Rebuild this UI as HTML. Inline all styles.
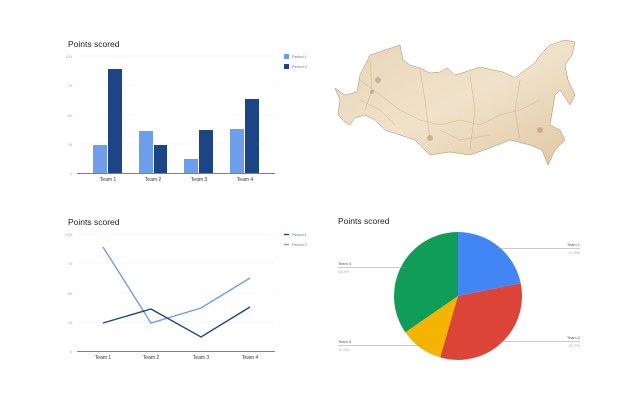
<!DOCTYPE html>
<html><head><style>
html,body{margin:0;padding:0;background:#fff;width:643px;height:406px;overflow:hidden}
svg{display:block;font-family:"Liberation Sans",sans-serif}
</style></head><body>
<svg width="643" height="406" viewBox="0 0 643 406">
<!-- Bar chart -->
<text x="68" y="47" font-size="8.5" fill="#222">Points scored</text>
<g stroke="#eee" stroke-width="0.6">
<line x1="77" y1="56" x2="275" y2="56"/><line x1="77" y1="85" x2="275" y2="85"/><line x1="77" y1="115" x2="275" y2="115"/><line x1="77" y1="144" x2="275" y2="144"/>
</g>
<line x1="77" y1="173.5" x2="275" y2="173.5" stroke="#555" stroke-width="0.8"/>
<g font-size="4" fill="#aaa" text-anchor="end">
<text x="72" y="58">100</text><text x="72" y="87">75</text><text x="72" y="117">50</text><text x="72" y="146">25</text><text x="72" y="175">0</text></g>
<g fill="#6d9eeb"><rect x="93" y="145" width="14" height="28"/><rect x="139" y="131" width="14" height="42"/><rect x="184" y="159" width="14" height="14"/><rect x="230" y="129" width="14" height="44"/></g>
<g fill="#1c4587"><rect x="108" y="69" width="14" height="104"/><rect x="154" y="145" width="13" height="28"/><rect x="199" y="130" width="14" height="43"/><rect x="245" y="99" width="14" height="74"/></g>
<g font-size="5" fill="#333" text-anchor="middle"><text x="108" y="181">Team 1</text><text x="153" y="181">Team 2</text><text x="199" y="181">Team 3</text><text x="245" y="181">Team 4</text></g>
<rect x="284" y="54" width="5" height="5" fill="#6d9eeb"/><rect x="284" y="64" width="5" height="5" fill="#1c4587"/>
<g font-size="4" fill="#777"><text x="292" y="58">Period 1</text><text x="292" y="68">Period 2</text></g>

<!-- Map -->
<defs><linearGradient id="mg" x1="0" y1="0" x2="1" y2="1"><stop offset="0" stop-color="#e6d4b6"/><stop offset="0.5" stop-color="#f0e2ca"/><stop offset="1" stop-color="#e0c8a2"/></linearGradient></defs>
<path d="M335,88 L345,95 L357,92 L360,75 L370,55 L385,50 L400,45 L403,60 L410,65 L420,68 L430,73 L440,72 L447,68 L455,75 L465,72 L480,67 L493,70 L503,72 L515,78 L525,70 L535,63 L540,55 L550,45 L565,40 L575,42 L572,55 L565,65 L568,80 L575,95 L570,105 L560,90 L555,95 L550,125 L560,130 L565,140 L555,150 L548,165 L542,150 L530,145 L510,140 L490,148 L470,155 L450,152 L430,155 L415,140 L400,135 L385,130 L375,120 L365,115 L355,118 L350,125 L345,122 L338,115 L340,100 Z" fill="url(#mg)" stroke="#a88a62" stroke-width="0.5"/>
<g stroke="#c4a880" stroke-width="0.4" fill="none"><path d="M360,80 L380,95 L400,110 L420,120 L440,125 L460,120 L480,125 L500,115 L520,110 L540,100"/><path d="M370,60 L372,90 L365,110"/><path d="M420,70 L425,100 L430,140"/><path d="M470,75 L475,110 L470,150"/><path d="M520,80 L515,110 L520,140"/><path d="M360,100 L380,110 L395,125"/><path d="M440,130 L460,140 L490,135"/></g>
<g fill="#8a6a45" opacity="0.35"><circle cx="378" cy="80" r="3"/><circle cx="372" cy="92" r="2"/><circle cx="430" cy="138" r="3"/><circle cx="540" cy="130" r="3"/></g>

<!-- Line chart -->
<text x="68" y="225" font-size="8.5" fill="#222">Points scored</text>
<g stroke="#eee" stroke-width="0.6">
<line x1="77" y1="234" x2="275" y2="234"/><line x1="77" y1="263" x2="275" y2="263"/><line x1="77" y1="293" x2="275" y2="293"/><line x1="77" y1="322" x2="275" y2="322"/>
</g>
<line x1="77" y1="351.5" x2="275" y2="351.5" stroke="#555" stroke-width="0.8"/>
<g font-size="4" fill="#aaa" text-anchor="end">
<text x="72" y="236">100</text><text x="72" y="265">75</text><text x="72" y="295">50</text><text x="72" y="324">25</text><text x="72" y="353">0</text></g>
<polyline points="103,247 151,323 201,308 250,278" fill="none" stroke="#6d9eeb" stroke-width="1.4"/>
<polyline points="103,323 151,309 201,337 250,307" fill="none" stroke="#1c4587" stroke-width="1.4"/>
<g font-size="5" fill="#333" text-anchor="middle"><text x="103" y="359">Team 1</text><text x="151" y="359">Team 2</text><text x="201" y="359">Team 3</text><text x="250" y="359">Team 4</text></g>
<line x1="284" y1="234.5" x2="289" y2="234.5" stroke="#1c4587" stroke-width="1.4"/><line x1="284" y1="244.5" x2="289" y2="244.5" stroke="#6d9eeb" stroke-width="1.4"/>
<g font-size="4" fill="#777"><text x="292" y="236">Period 1</text><text x="292" y="246">Period 2</text></g>

<!-- Pie -->
<text x="338" y="224" font-size="8.5" fill="#222">Points scored</text>
<path d="M458,296 L458,232 A64,64 0 0 1 520.7,283.3 Z" fill="#4285f4"/>
<path d="M458,296 L520.7,283.3 A64,64 0 0 1 440.1,357.4 Z" fill="#db4437"/>
<path d="M458,296 L440.1,357.4 A64,64 0 0 1 405.3,332.3 Z" fill="#f4b400"/>
<path d="M458,296 L405.3,332.3 A64,64 0 0 1 458,232 Z" fill="#0f9d58"/>
<g stroke="#999" stroke-width="0.5"><line x1="497" y1="248.5" x2="580" y2="248.5"/><line x1="338" y1="267.5" x2="405" y2="267.5"/><line x1="338" y1="345.5" x2="423" y2="345.5"/><line x1="500" y1="341.5" x2="580" y2="341.5"/></g>
<g font-size="4" fill="#555"><text x="580" y="246" text-anchor="end">Team 1</text><text x="338" y="265">Team 4</text><text x="338" y="343">Team 3</text><text x="580" y="339" text-anchor="end">Team 2</text></g>
<g font-size="4" fill="#aaa"><text x="580" y="254" text-anchor="end">21.8%</text><text x="338" y="273">34.5%</text><text x="338" y="351">10.9%</text><text x="580" y="347" text-anchor="end">32.7%</text></g>
</svg>
</body></html>
